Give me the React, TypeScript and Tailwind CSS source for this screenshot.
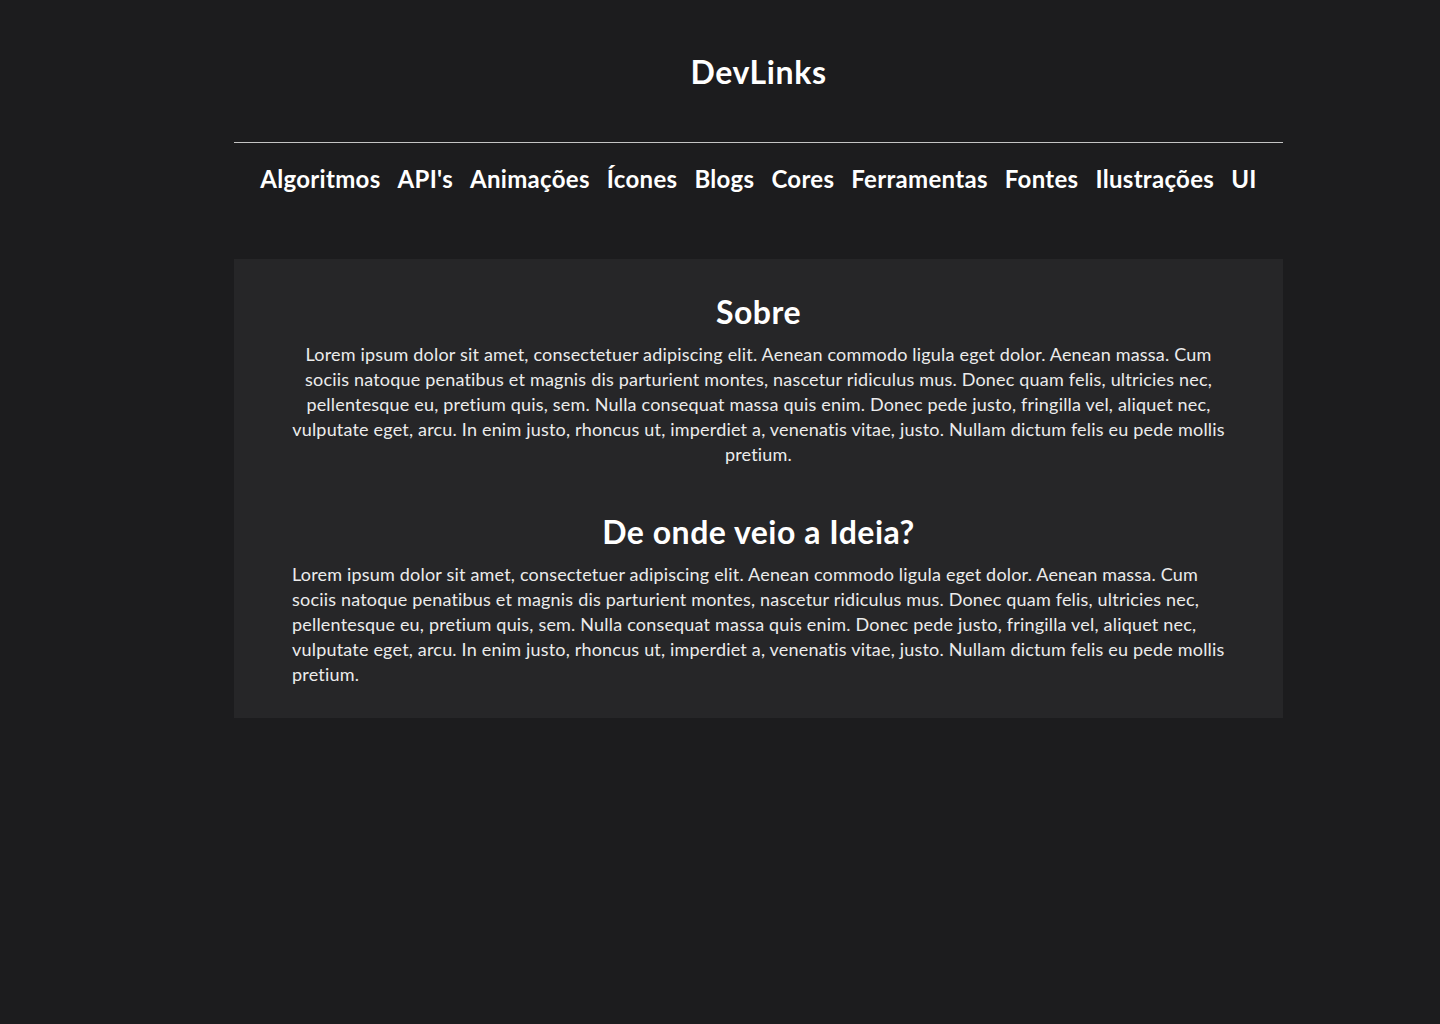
import React from "react";

const lines = [
  "Lorem ipsum dolor sit amet, consectetuer adipiscing elit. Aenean commodo ligula eget dolor. Aenean massa. Cum",
  "sociis natoque penatibus et magnis dis parturient montes, nascetur ridiculus mus. Donec quam felis, ultricies nec,",
  "pellentesque eu, pretium quis, sem. Nulla consequat massa quis enim. Donec pede justo, fringilla vel, aliquet nec,",
  "vulputate eget, arcu. In enim justo, rhoncus ut, imperdiet a, venenatis vitae, justo. Nullam dictum felis eu pede mollis",
  "pretium.",
];

const nav = ["Algoritmos", "API's", "Animações", "Ícones", "Blogs", "Cores", "Ferramentas", "Fontes", "Ilustrações", "UI"];

function Para({ center }: { center?: boolean }) {
  return (
    <p className={`mt-[8px] text-[18px] leading-[25px] tracking-[0.19px] text-[#ececec] ${center ? "text-center" : "text-left"}`}>
      {lines.map((l, i) => (
        <span key={i} className="block whitespace-nowrap">{l}</span>
      ))}
    </p>
  );
}

export default function App() {
  return (
    <div className="min-h-[1024px] bg-[#1c1c1e] text-white" style={{ fontFamily: "Lato, 'Noto Sans', sans-serif" }}>
      <div className="ml-[234px] w-[1049px] pt-[50px]">
        <h1 className="h-[44px] text-center text-[32px] font-bold leading-[44px] tracking-[0.6px]">DevLinks</h1>
        <div className="mt-[48px] h-px bg-[#c4c4c4]" />
        <nav className="mt-[19px] flex h-[33px] justify-center gap-[17px] text-[24px] font-bold leading-[33px] tracking-[0.3px]">
          {nav.map((n) => (
            <a key={n} href="#" className="text-white">{n}</a>
          ))}
        </nav>
        <section className="mt-[64px] bg-[#262628] px-[58px] pb-[31px] pt-[31px]">
          <h2 className="h-[44px] text-center text-[32px] font-bold leading-[44px] tracking-[0.5px]">Sobre</h2>
          <Para center />
          <h2 className="mt-[43px] h-[44px] text-center text-[32px] font-bold leading-[44px] tracking-[0.5px]">De onde veio a Ideia?</h2>
          <Para />
        </section>
      </div>
    </div>
  );
}
